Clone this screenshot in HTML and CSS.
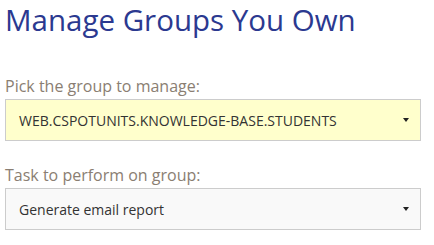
FILE: index.html
```html
<!DOCTYPE html>
<html>
<head>
  <title>Manage Groups You Own</title>
  <link rel="stylesheet" href="styles.css">
</head>
<body>

  <h1>Manage Groups You Own</h1>

  <div class="field">
    <label>Pick the group to manage:</label>
    <div class="select current">
      <span>WEB.CSPOTUNITS.KNOWLEDGE-BASE.STUDENTS</span>
      <svg class="caret" width="6" height="4" viewBox="0 0 6 4"><path d="M0 0h6L3 4z" fill="#222"/></svg>
    </div>
  </div>

  <div class="field">
    <label>Task to perform on group:</label>
    <div class="select">
      <span>Generate email report</span>
      <svg class="caret" width="6" height="4" viewBox="0 0 6 4"><path d="M0 0h6L3 4z" fill="#222"/></svg>
    </div>
  </div>

</body>
</html>
```

FILE: styles.css
```css
body {
  font-family: 'Open Sans', sans-serif;
  margin: 0;
  padding: 0 13px 0 5px;
  background: #fff;
}
h1 {
  font-size: 29.5px;
  font-weight: 400;
  color: #2b3990;
  line-height: 40px;
  margin: 0 0 35px;
}
.field {
  margin-bottom: 23px;
}
label {
  display: block;
  font-size: 16px;
  color: #8a7e72;
  line-height: 22px;
  margin-bottom: 2px;
}
.select {
  box-sizing: border-box;
  display: flex;
  align-items: center;
  justify-content: space-between;
  height: 42px;
  padding: 0 11px 0 13px;
  border: 1px solid #ccc;
  background: #f9f9f9;
  font-size: 14px;
  color: #333;
}
.select.current {
  background: #ffffcc;
}
.caret {
  display: block;
}
```
